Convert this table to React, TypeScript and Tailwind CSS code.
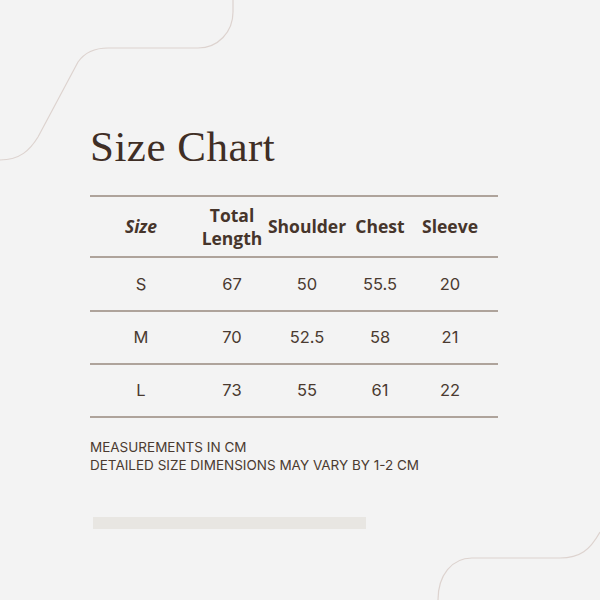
const rows = [
  ["S", "67", "50", "55.5", "20"],
  ["M", "70", "52.5", "58", "21"],
  ["L", "73", "55", "61", "22"],
];

const cols = "grid grid-cols-[102px_80px_70px_76px_64px] pr-[16px]";

export default function App() {
  return (
    <div className="relative w-[600px] h-[600px] overflow-hidden bg-[#f3f3f3] text-[#46352b]">
      {/* decorative curves */}
      <svg className="absolute inset-0" width="600" height="600" fill="none">
        <path
          d="M0 160 C20 160 30 150 38 137 L78 62 C85 52 95 48 108 48 L198 48 C218 48 233 32 233 12 L233 0"
          stroke="#ddd3cf"
          strokeWidth="1.2"
        />
        <path
          d="M600 532 C590 550 580 558 560 558 L472 558 C452 558 438 575 438 600"
          stroke="#ddd3cf"
          strokeWidth="1.2"
        />
      </svg>

      <div className="relative flex flex-col pl-[90px] pt-[125px]">
        <h1 className="font-['Liberation_Serif',serif] text-[43px] leading-none tracking-[0.5px] font-normal text-[#3f2e25]">
          Size Chart
        </h1>

        <div className="mt-[27px] w-[408px] border-t-2 border-[#aea39b]">
          <div
            className={`${cols} h-[61px] items-center border-b-2 border-[#aea39b] font-['Open_Sans',sans-serif] font-bold text-[17.5px] leading-[23px] text-center whitespace-nowrap`}
          >
            <span className="flex justify-center italic">Size</span>
            <span className="flex justify-center">
              Total
              <br />
              Length
            </span>
            <span className="flex justify-center">Shoulder</span>
            <span className="flex justify-center">Chest</span>
            <span className="flex justify-center">Sleeve</span>
          </div>
          {rows.map((r, i) => (
            <div
              key={r[0]}
              className={`${cols} ${i === 0 ? "h-[54px]" : "h-[53px]"} items-center border-b-2 border-[#aea39b] font-['Inter',sans-serif] text-[16.5px] text-center text-[#4a3a30]`}
            >
              {r.map((c, j) => (
                <span key={j}>{c}</span>
              ))}
            </div>
          ))}
        </div>

        <div className="mt-[20px] font-['Inter',sans-serif] text-[13.5px] leading-[18px] text-[#4a3a30] uppercase">
          <p>Measurements in cm</p>
          <p>Detailed size dimensions may vary by 1-2 cm</p>
        </div>

        <div className="mt-[43px] ml-[3px] w-[273px] h-[12px] bg-[#e8e6e2]" />
      </div>
    </div>
  );
}
